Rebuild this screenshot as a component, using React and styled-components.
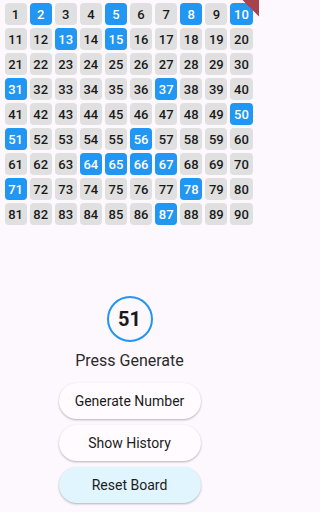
import styled, { createGlobalStyle } from "styled-components";

const GlobalStyle = createGlobalStyle`
  html, body {
    margin: 0;
    padding: 0;
    background: #fdf7fe;
  }
  body {
    font-family: Roboto, "Noto Sans", sans-serif;
  }
`;

const Page = styled.div`
  position: relative;
  width: 259px;
  min-height: 512px;
  overflow: hidden;
  display: flex;
  flex-direction: column;
  align-items: center;
  padding-top: 3px;
  box-sizing: border-box;
`;

const Board = styled.div`
  width: 248px;
  margin-left: -2px;
  display: grid;
  grid-template-columns: repeat(10, 1fr);
  gap: 3px;
`;

const Cell = styled.div`
  height: 22px;
  border-radius: 4px;
  display: flex;
  align-items: center;
  justify-content: center;
  font-size: 13px;
  font-weight: 500;
  background: ${(p) => (p.$picked ? "#2196f3" : "#e0e0e0")};
  color: ${(p) => (p.$picked ? "#ffffff" : "#1a1a1a")};
`;

const Circle = styled.div`
  margin-top: 71px;
  width: 42px;
  height: 42px;
  border: 2px solid #2196f3;
  border-radius: 50%;
  display: flex;
  align-items: center;
  justify-content: center;
  font-size: 20px;
  font-weight: 700;
  color: #1a1a1a;
`;

const Status = styled.div`
  margin-top: 9px;
  font-size: 16px;
  line-height: 19px;
  color: #2b2b2b;
`;

const Actions = styled.div`
  margin-top: 13px;
  display: flex;
  flex-direction: column;
  gap: 6px;
`;

const Button = styled.button`
  width: 142px;
  height: 36px;
  border: none;
  border-radius: 18px;
  font-family: Roboto, "Noto Sans", sans-serif;
  font-size: 14px;
  font-weight: 400;
  color: #1d1b20;
  background: ${(p) => (p.$tint ? "#e1f5fe" : "#fffbff")};
  box-shadow: 0 1px 2px rgba(0, 0, 0, 0.2), 0 1px 3px rgba(0, 0, 0, 0.1);
`;

const Banner = styled.div`
  position: absolute;
  top: -4px;
  right: -24px;
  width: 60px;
  height: 12px;
  background: #a8424c;
  transform: rotate(45deg);
`;

const picked = [2, 5, 8, 10, 13, 15, 31, 37, 50, 51, 56, 64, 65, 66, 67, 71, 78, 87];

export default function App() {
  const numbers = Array.from({ length: 90 }, (_, i) => i + 1);
  return (
    <>
      <GlobalStyle />
      <Page>
        <Board>
          {numbers.map((n) => (
            <Cell key={n} $picked={picked.includes(n)}>
              {n}
            </Cell>
          ))}
        </Board>
        <Circle>51</Circle>
        <Status>Press Generate</Status>
        <Actions>
          <Button>Generate Number</Button>
          <Button>Show History</Button>
          <Button $tint>Reset Board</Button>
        </Actions>
        <Banner />
      </Page>
    </>
  );
}
